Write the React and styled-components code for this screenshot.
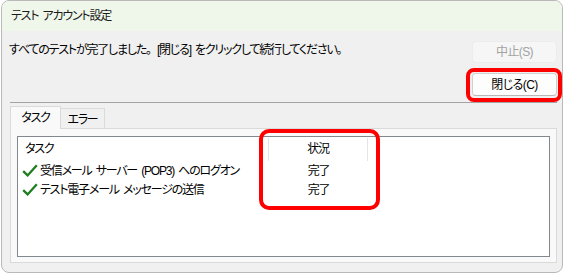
import React from "react";
import styled, { createGlobalStyle } from "styled-components";

const GlobalStyle = createGlobalStyle`
  html, body {
    margin: 0;
    padding: 0;
    background: #ffffff;
  }
  body {
    font-family: "Liberation Sans", "Noto Sans CJK JP", sans-serif;
    font-size: 12px;
    font-feature-settings: "palt" 1;
    letter-spacing: -1.2px;
    word-spacing: 2px;
    color: #000;
  }
`;

const Window = styled.div`
  box-sizing: border-box;
  width: 562px;
  height: 273px;
  margin-left: 1px;
  border: 1px solid #b9b9b9;
  border-radius: 8px;
  overflow: hidden;
  background: #f0f0f0;
  display: flex;
  flex-direction: column;
`;

const TitleBar = styled.div`
  height: 30px;
  flex: none;
  display: flex;
  align-items: center;
  padding-left: 9px;
  background: #eef7e9;
  color: #1b1b1b;
  line-height: 16px;
`;

const Body = styled.div`
  flex: 1;
  display: flex;
  flex-direction: column;
  padding: 0 5px 9px 7px;
`;

const TopArea = styled.div`
  display: flex;
  justify-content: space-between;
  align-items: flex-start;
  padding-top: 10px;
`;

const Message = styled.div`
  line-height: 16px;
  padding-top: 1px;
`;

/* full-width punctuation keeps its em box */
const Wide = styled.span`
  font-feature-settings: normal;
`;

const ButtonColumn = styled.div`
  display: flex;
  flex-direction: column;
  gap: 10px;
`;

const Button = styled.div`
  position: relative;
  box-sizing: border-box;
  width: 85px;
  height: ${(p) => (p.disabled ? "22px" : "23px")};
  display: flex;
  align-items: center;
  justify-content: center;
  border-radius: 4px;
  border: 1px solid ${(p) => (p.disabled ? "#ececec" : "#d0d0d0")};
  border-bottom-color: ${(p) => (p.disabled ? "#ececec" : "#b8b8b8")};
  background: ${(p) => (p.disabled ? "#f6f6f6" : "#fdfdfd")};
  color: ${(p) => (p.disabled ? "#a2a2a2" : "#000")};
  letter-spacing: -0.6px;
  line-height: 16px;
`;

const Highlight = styled.div`
  position: absolute;
  box-sizing: border-box;
  border: 4px solid #ff0000;
  border-radius: ${(p) => p.$radius || 8}px;
  pointer-events: none;
`;

const ButtonMark = styled(Highlight)`
  inset: -6px -6px -7px -7px;
`;

const Separator = styled.div`
  height: 1px;
  background: #a3a3a3;
  margin: 6px 0 2px 1px;
`;

const TabStrip = styled.div`
  display: flex;
  align-items: flex-end;
  margin-left: 1px;
  height: 23px;
`;

const Tab = styled.div`
  box-sizing: border-box;
  height: ${(p) => (p.active ? "23px" : "20px")};
  width: ${(p) => (p.active ? "51px" : "44px")};
  display: flex;
  align-items: center;
  justify-content: center;
  background: ${(p) => (p.active ? "#f9f9f9" : "#f0f0f0")};
  border: 1px solid #dadada;
  border-left: ${(p) => (p.active ? "1px solid #dadada" : "none")};
  border-bottom: none;
  margin-bottom: ${(p) => (p.active ? "-1px" : "0")};
  position: relative;
  z-index: ${(p) => (p.active ? 1 : 0)};
  line-height: 16px;
  padding-top: ${(p) => (p.active ? "0" : "2px")};
`;

const Panel = styled.div`
  box-sizing: border-box;
  flex: 1;
  margin-left: 1px;
  background: #f9f9f9;
  border: 1px solid #dadada;
  padding: 7px 6px 5px 6px;
  display: flex;
`;

const ListBox = styled.div`
  position: relative;
  flex: 1;
  background: #fff;
  border: 1px solid #828790;
`;

const HeaderRow = styled.div`
  display: grid;
  grid-template-columns: 251px 99px;
  height: 24px;
`;

const HeaderCell = styled.div`
  display: flex;
  align-items: center;
  justify-content: ${(p) => (p.center ? "center" : "flex-start")};
  padding-left: ${(p) => (p.center ? "0" : "7px")};
  padding-bottom: 1px;
  border-right: 1px solid #e5e5e5;
  margin: 1px 0 0;
  line-height: 16px;
`;

const Row = styled.div`
  display: grid;
  grid-template-columns: 251px 99px;
  height: 19px;
  align-items: center;
  line-height: 16px;
`;

const TaskCell = styled.div`
  display: flex;
  align-items: center;
  gap: 2px;
  padding-left: 4px;
  white-space: nowrap;
`;

const StatusCell = styled.div`
  text-align: center;
`;

const StatusMark = styled(Highlight)`
  left: 241px;
  top: -8px;
  width: 121px;
  height: 81px;
`;

const Check = () => (
  <svg width="16" height="13" viewBox="0 0 16 13">
    <path
      d="M1.2 7.2 L5.6 11.4 L14.8 1.2"
      fill="none"
      stroke="#1e7d1e"
      strokeWidth="2.3"
      strokeLinejoin="miter"
    />
  </svg>
);

const tasks = [
  { name: "受信メール サーバー (POP3) へのログオン", status: "完了" },
  { name: "テスト電子メール メッセージの送信", status: "完了" },
];

const App = () => {
  return (
    <>
      <GlobalStyle />
      <Window>
        <TitleBar>テスト アカウント設定</TitleBar>
        <Body>
          <TopArea>
            <Message>
              すべてのテストが完了しました<Wide>。</Wide>[閉じる] をクリックして続行してください<Wide>。</Wide>
            </Message>
            <ButtonColumn>
              <Button disabled>中止(S)</Button>
              <Button>
                閉じる(C)
                <ButtonMark />
              </Button>
            </ButtonColumn>
          </TopArea>
          <Separator />
          <TabStrip>
            <Tab active>タスク</Tab>
            <Tab>エラー</Tab>
          </TabStrip>
          <Panel>
            <ListBox>
              <HeaderRow>
                <HeaderCell>タスク</HeaderCell>
                <HeaderCell center>状況</HeaderCell>
              </HeaderRow>
              {tasks.map((t) => (
                <Row key={t.name}>
                  <TaskCell>
                    <Check />
                    {t.name}
                  </TaskCell>
                  <StatusCell>{t.status}</StatusCell>
                </Row>
              ))}
              <StatusMark $radius={10} />
            </ListBox>
          </Panel>
        </Body>
      </Window>
    </>
  );
};

export default App;
